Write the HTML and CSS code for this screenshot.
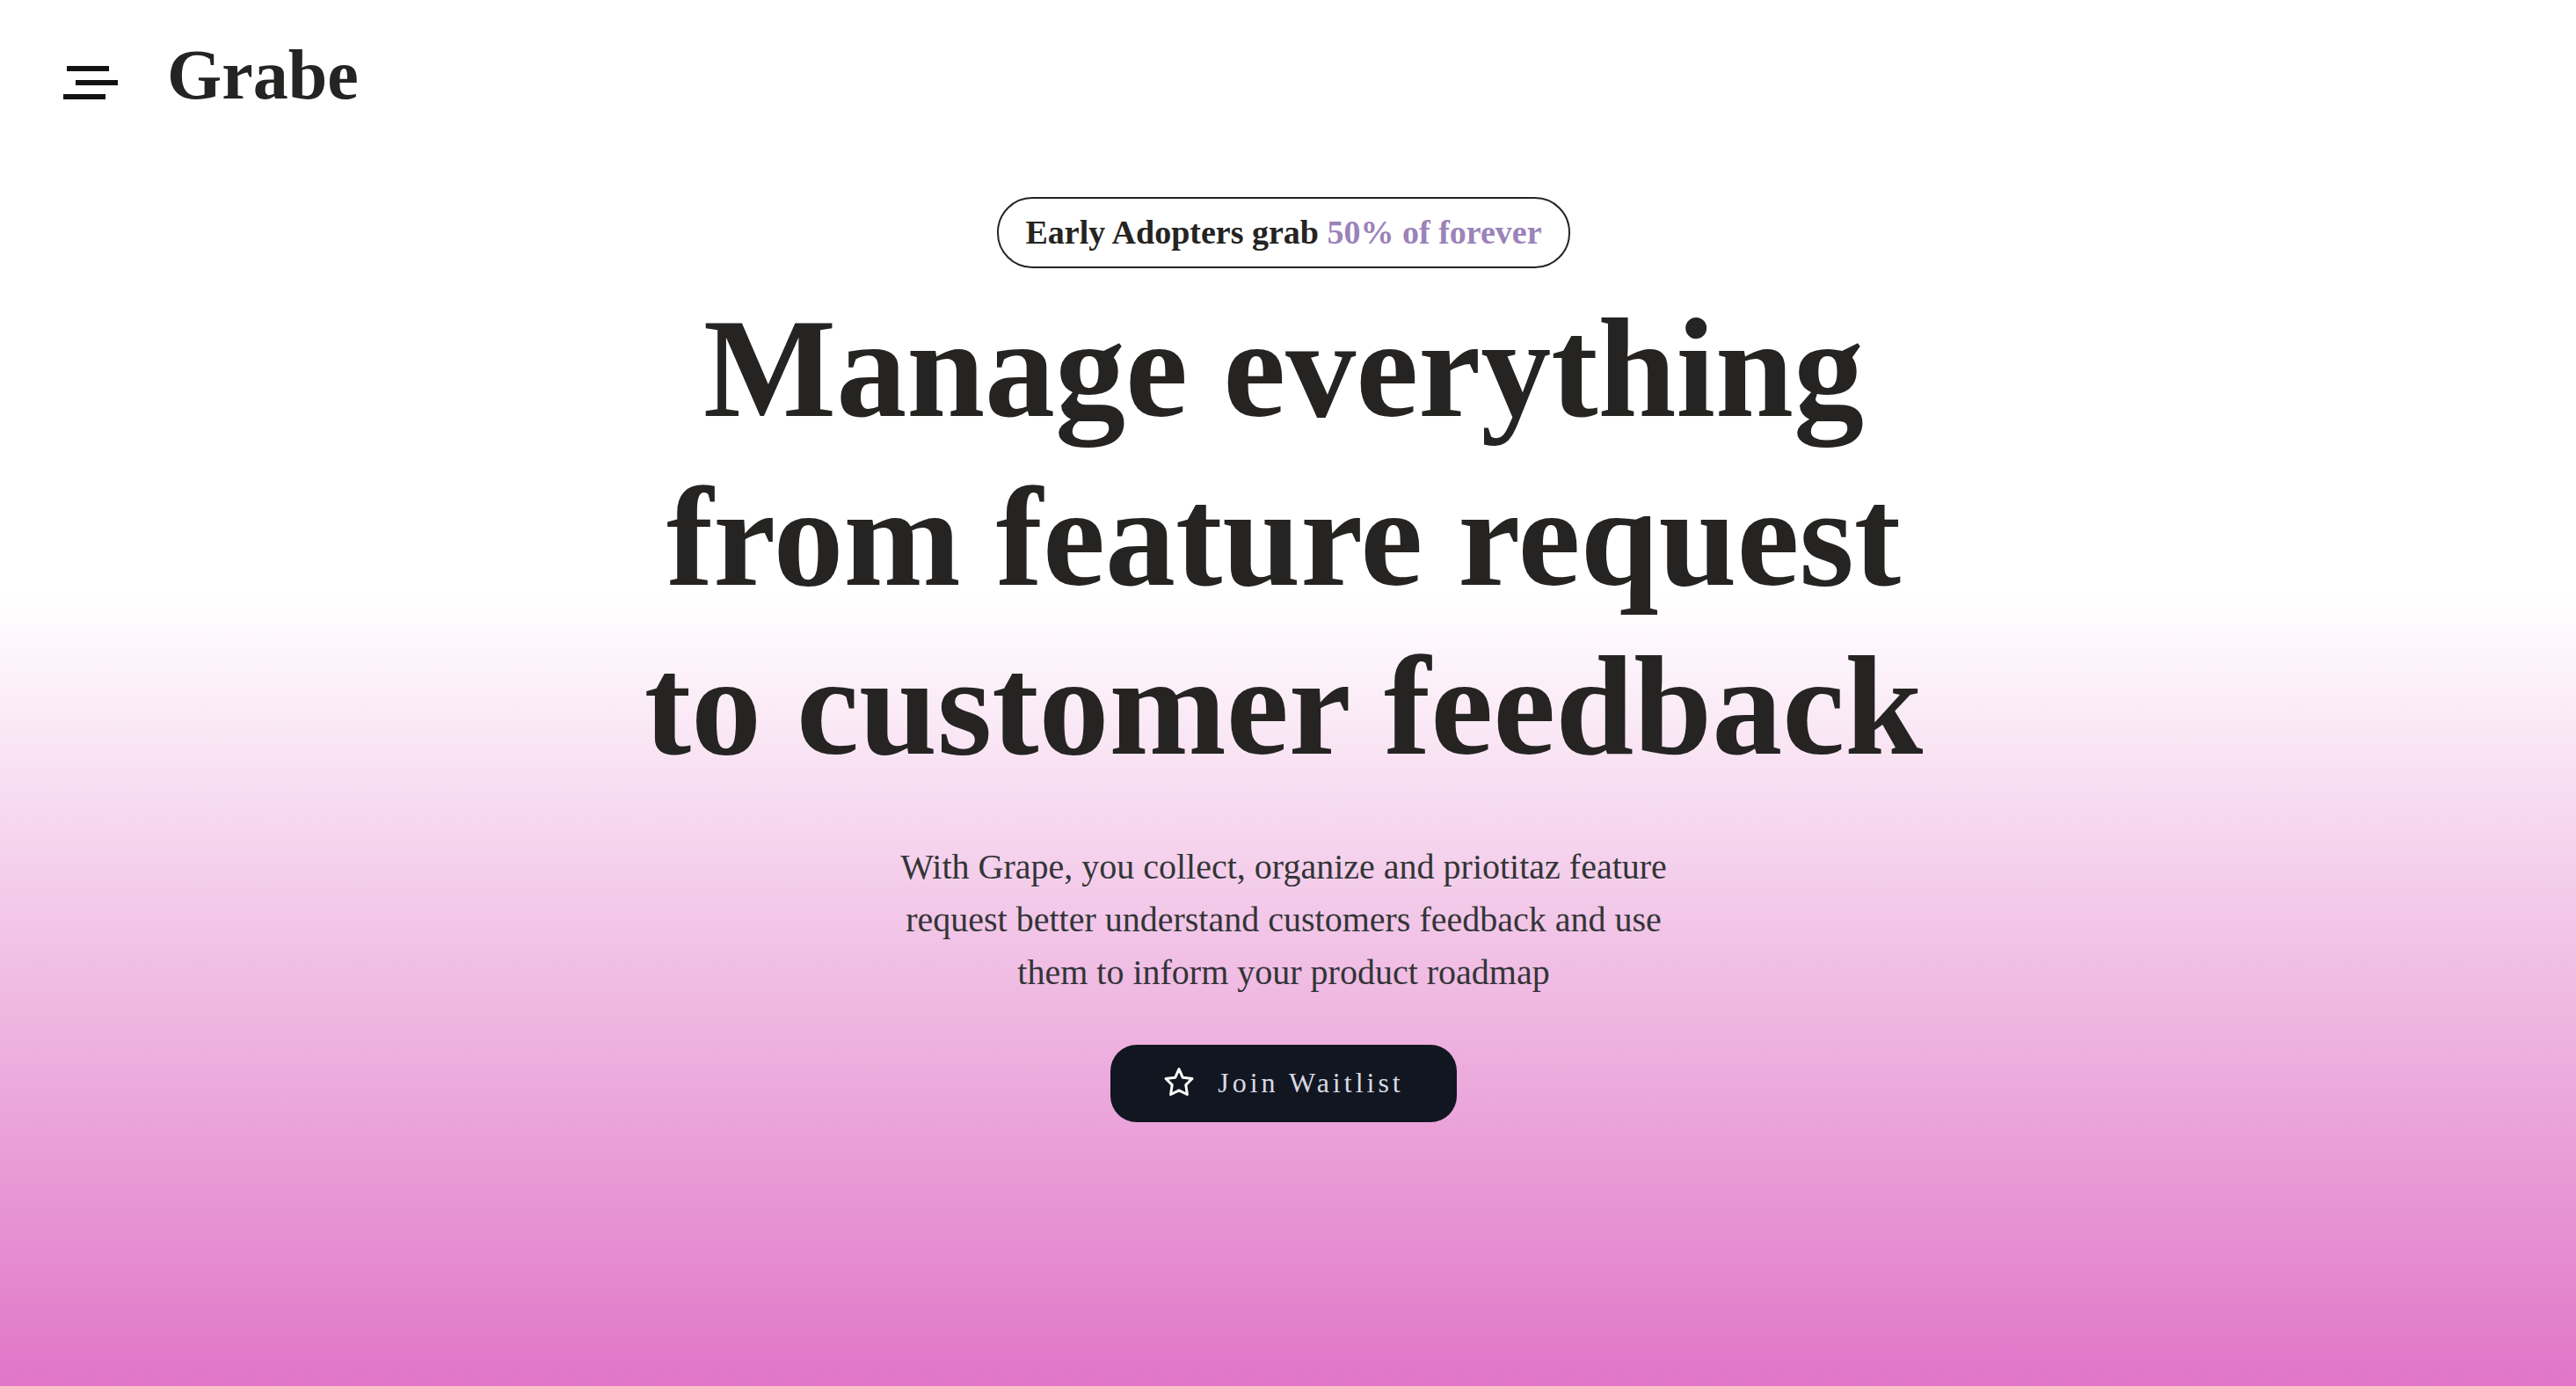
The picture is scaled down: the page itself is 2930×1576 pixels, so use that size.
FILE: index.html
```html
<!DOCTYPE html>
<html lang="en">
<head>
  <meta charset="utf-8">
  <meta name="viewport" content="width=device-width, initial-scale=1">
  <title>Grabe</title>
  <link rel="stylesheet" href="styles.css">
</head>
<body>
  <header class="header">
    <button class="menu" type="button" aria-label="Menu">
      <svg width="62" height="38" viewBox="0 0 62 38" fill="#131313" aria-hidden="true">
        <rect x="4" y="0" width="48" height="6"/>
        <rect x="14" y="16" width="48" height="6"/>
        <rect x="0" y="32" width="48" height="6"/>
      </svg>
    </button>
    <a class="logo" href="#">Grabe</a>
  </header>
  <main class="hero">
    <p class="badge">Early Adopters grab <span class="badge-accent">50% of forever</span></p>
    <h1 class="title">Manage everything<br>from feature request<br>to customer feedback</h1>
    <p class="lead">With Grape, you collect, organize and priotitaz feature request better understand customers feedback and use them to inform your product roadmap</p>
    <button class="join" type="button">
      <svg class="star" width="36" height="36" viewBox="0 0 36 36" fill="none" stroke="#fff" stroke-width="3" stroke-linejoin="round" aria-hidden="true">
        <path d="M18 2.5L22.3 12.3L33 13.5L25.8 20.6L27.4 31.5L18 26.8L8.6 31.5L10.2 20.6L3 13.5L13.7 12.3Z"/>
      </svg>
      <span>Join Waitlist</span>
    </button>
  </main>
</body>
</html>
```
FILE: styles.css
```css
* {
  box-sizing: border-box;
}

body {
  margin: 0;
  min-height: 100vh;
  font-family: "Liberation Serif", "Times New Roman", serif;
  color: #252422;
  background: linear-gradient(to bottom, #fff 43%, #e075c7 100%);
}

button {
  border: 0;
  font-family: inherit;
  cursor: pointer;
}

.header {
  display: flex;
  align-items: center;
  gap: 56px;
  padding: 40px 72px;
}

.menu {
  display: flex;
  padding: 18px 0 0;
  background: none;
}

.logo {
  font-size: 80px;
  line-height: 90px;
  font-weight: 700;
  color: inherit;
  text-decoration: none;
}

.hero {
  display: flex;
  flex-direction: column;
  align-items: center;
  padding: 54px 10px 80px 0;
  text-align: center;
}

.badge {
  margin: 0;
  padding: 16px 30px;
  border: 2px solid #252422;
  border-radius: 40px;
  font-size: 38px;
  line-height: 45px;
  font-weight: 700;
}

.badge-accent {
  color: #9b83b9;
}

.title {
  margin: 18px 0 0;
  font-size: 160px;
  line-height: 192px;
  font-weight: 700;
}

.lead {
  max-width: 900px;
  margin: 57px 0 0;
  font-size: 40px;
  line-height: 60px;
  color: #333537;
}

.join {
  display: flex;
  align-items: center;
  gap: 26px;
  margin-top: 52px;
  padding: 0 60px 2px;
  border-radius: 30px;
  background: #121620;
  color: #d7d9e6;
  font-size: 32px;
  line-height: 86px;
  letter-spacing: 4px;
}
```
